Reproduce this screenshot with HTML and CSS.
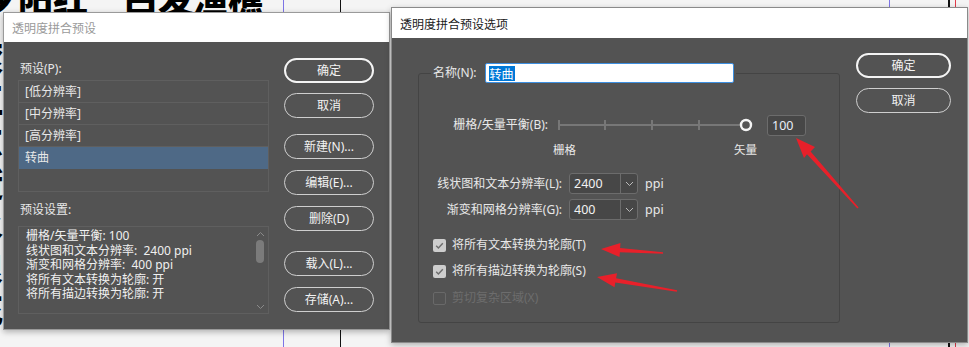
FILE: index.html
```html
<!DOCTYPE html>
<html lang="zh">
<head>
<meta charset="utf-8">
<title>透明度拼合预设</title>
<link rel="stylesheet" href="styles.css">
</head>
<body>
<div class="desk">
  <div class="doc-text">夕阳红　白发渔樵</div>
  <div class="doc-edge">滚<br>江<br>东<br>逝<br>水<br>浪<br>花</div>
  <div class="vline purple l1"></div>
  <div class="vline black l2"></div>
  <div class="vline purple l3"></div>
  <div class="vline black thick l4"></div>
  <div class="vline red l5"></div>

  <div class="dlg dlg-left">
    <div class="titlebar inactive">透明度拼合预设</div>
    <div class="left-body">
      <div class="col-main">
        <div class="lbl">预设(P):</div>
        <div class="listbox">
          <div class="row">[低分辨率]</div>
          <div class="row">[中分辨率]</div>
          <div class="row">[高分辨率]</div>
          <div class="row sel">转曲</div>
        </div>
        <div class="lbl lbl2">预设设置:</div>
        <div class="infobox">
          <div class="infotext">
            <div>栅格/矢量平衡: 100</div>
            <div>线状图和文本分辨率:&nbsp; 2400 ppi</div>
            <div>渐变和网格分辨率:&nbsp; 400 ppi</div>
            <div>将所有文本转换为轮廓: 开</div>
            <div>将所有描边转换为轮廓: 开</div>
          </div>
          <div class="scrollbar">
            <svg class="chev" width="9" height="6" viewBox="0 0 9 6"><path d="M1 5 L4.5 1.5 L8 5" fill="none" stroke="#8a8a8a" stroke-width="1"/></svg>
            <div class="thumb"></div>
            <div class="spacer"></div>
            <svg class="chev" width="9" height="6" viewBox="0 0 9 6"><path d="M1 1 L4.5 4.5 L8 1" fill="none" stroke="#8a8a8a" stroke-width="1"/></svg>
          </div>
        </div>
      </div>
      <div class="col-btns">
        <div class="btn-group">
          <button class="btn primary">确定</button>
          <button class="btn">取消</button>
        </div>
        <div class="btn-group g2">
          <button class="btn">新建(N)...</button>
          <button class="btn">编辑(E)...</button>
          <button class="btn">删除(D)</button>
        </div>
        <div class="btn-group g3">
          <button class="btn">载入(L)...</button>
          <button class="btn">存储(A)...</button>
        </div>
      </div>
    </div>
  </div>

  <div class="dlg dlg-right">
    <div class="titlebar">透明度拼合预设选项</div>
    <div class="right-body">
      <fieldset class="group">
        <legend class="legend">
          <span class="name-lbl">名称(N):</span>
          <span class="name-input"><span class="selected-text">转曲</span></span>
        </legend>
        <div class="slider-row">
          <span class="r-lbl slider-lbl">栅格/矢量平衡(B):</span>
          <svg class="slider" width="196" height="16" viewBox="0 0 196 16">
            <line x1="0" y1="8" x2="188" y2="8" stroke="#777" stroke-width="2"/>
            <line x1="1" y1="3" x2="1" y2="13" stroke="#777" stroke-width="2"/>
            <line x1="47" y1="3" x2="47" y2="13" stroke="#777" stroke-width="2"/>
            <line x1="94" y1="3" x2="94" y2="13" stroke="#777" stroke-width="2"/>
            <line x1="141" y1="3" x2="141" y2="13" stroke="#777" stroke-width="2"/>
            <circle cx="188" cy="8" r="5" fill="#535353" stroke="#f4f4f4" stroke-width="2.4"/>
          </svg>
          <span class="num-input">100</span>
        </div>
        <div class="slider-ends">
          <span>栅格</span>
          <span>矢量</span>
        </div>
        <div class="res-row r1">
          <span class="r-lbl res-lbl">线状图和文本分辨率(L):</span>
          <span class="select">
            <span class="sel-val">2400</span>
            <span class="sel-btn"><svg width="9" height="6" viewBox="0 0 9 6"><path d="M1 1 L4.5 4.5 L8 1" fill="none" stroke="#bbb" stroke-width="1"/></svg></span>
          </span>
          <span class="unit">ppi</span>
        </div>
        <div class="res-row r2">
          <span class="r-lbl res-lbl">渐变和网格分辨率(G):</span>
          <span class="select">
            <span class="sel-val">400</span>
            <span class="sel-btn"><svg width="9" height="6" viewBox="0 0 9 6"><path d="M1 1 L4.5 4.5 L8 1" fill="none" stroke="#bbb" stroke-width="1"/></svg></span>
          </span>
          <span class="unit">ppi</span>
        </div>
        <div class="chk-row c1">
          <span class="chk on"><svg width="13" height="13" viewBox="0 0 13 13"><path d="M3.2 6.8 L5.4 9 L9.8 4.2" fill="none" stroke="#6c6c6c" stroke-width="1.4"/></svg></span>
          <span>将所有文本转换为轮廓(T)</span>
        </div>
        <div class="chk-row c2">
          <span class="chk on"><svg width="13" height="13" viewBox="0 0 13 13"><path d="M3.2 6.8 L5.4 9 L9.8 4.2" fill="none" stroke="#6c6c6c" stroke-width="1.4"/></svg></span>
          <span>将所有描边转换为轮廓(S)</span>
        </div>
        <div class="chk-row c3 disabled">
          <span class="chk off"></span>
          <span>剪切复杂区域(X)</span>
        </div>
      </fieldset>
      <div class="col-btns right-btns">
        <div class="btn-group">
          <button class="btn primary">确定</button>
          <button class="btn">取消</button>
        </div>
      </div>
    </div>
  </div>

  <svg class="arrows" width="969" height="347" viewBox="0 0 969 347">
    <polygon fill="#e8202a" points="796,138 815,147 810.6,151.4 858.6,207.6 857.4,208.4 807,154.2 804,158"/>
    <polygon fill="#e8202a" points="601,249 620.5,243 620.1,247.9 663,252.3 663,253.7 619.9,252.3 619.5,257"/>
    <polygon fill="#e8202a" points="597,277 617,273.3 616.1,278.2 677.2,290.2 676.8,291.8 615.3,282.4 614.5,287.2"/>
  </svg>
</div>
</body>
</html>
```

FILE: styles.css
```css
* { box-sizing: border-box; }

html, body {
  margin: 0;
  padding: 0;
}

body {
  width: 969px;
  height: 347px;
  overflow: hidden;
  background: #f3f3f3;
  font-family: "Noto Sans", "Noto Sans CJK SC", sans-serif;
  font-size: 12px;
  color: #e8e8e8;
}

.desk {
  position: relative;
  width: 969px;
  height: 347px;
  overflow: hidden;
  background: #f4f4f4;
}

/* document behind the dialogs */
.doc-text {
  position: absolute;
  left: -17px;
  top: -22px;
  font-family: "Noto Sans CJK SC", sans-serif;
  font-weight: 900;
  font-size: 35px;
  line-height: 40px;
  color: #000;
  white-space: nowrap;
}

.doc-edge {
  position: absolute;
  left: -31px;
  top: 36px;
  font-family: "Noto Sans CJK SC", sans-serif;
  font-weight: 900;
  font-size: 34px;
  line-height: 42px;
  color: #000;
}

.vline {
  position: absolute;
  top: 0;
  width: 1px;
  height: 347px;
}
.vline.purple { background: #7d74e6; }
.vline.black { background: #111; }
.vline.red { background: #e23b4a; }
.vline.thick { width: 2px; }
.l1 { left: 283px; }
.l2 { left: 340px; }
.l3 { left: 889px; }
.l4 { left: 948px; }
.l5 { left: 955px; }

/* dialogs */
.dlg {
  position: absolute;
  background: #535353;
  border: 1px solid #9a9a9a;
  box-shadow: 0 2px 6px rgba(0, 0, 0, 0.28);
  display: flex;
  flex-direction: column;
}

.dlg-left {
  left: 3px;
  top: 12px;
  width: 387px;
  height: 318px;
}

.dlg-right {
  left: 391px;
  top: 7px;
  width: 577px;
  height: 336px;
  border-color: #8a8a8a;
}

.titlebar {
  background: #ffffff;
  height: 30px;
  flex: none;
  display: flex;
  align-items: center;
  padding-left: 8px;
  font-family: "Noto Sans CJK SC", sans-serif;
  font-size: 12px;
  color: #1a1a1a;
}
.titlebar.inactive {
  height: 29px;
  color: #9a9a9a;
}

/* left dialog body */
.left-body {
  flex: 1;
  display: flex;
  padding: 16px 0 0 14px;
}

.col-main {
  width: 251px;
  padding-top: 3px;
  display: flex;
  flex-direction: column;
}

.lbl {
  height: 16px;
  line-height: 16px;
  padding-left: 2px;
  margin-bottom: 3px;
}
.lbl2 {
  margin-top: 10px;
  margin-bottom: 8px;
}

.listbox {
  height: 112px;
  border: 1px solid #5f5f5f;
}
.row {
  height: 22px;
  line-height: 21px;
  border-bottom: 1px solid #5f5f5f;
  padding-left: 6px;
}
.row.sel {
  background: #4e6986;
  border-bottom-color: #4e6986;
}

.infobox {
  height: 88px;
  border: 1px solid #5f5f5f;
  display: flex;
}
.infotext {
  flex: 1;
  padding: 2px 0 0 7px;
  font-size: 12px;
  line-height: 14.5px;
  color: #f0f0f0;
}
.scrollbar {
  width: 14px;
  margin-right: 1px;
  display: flex;
  flex-direction: column;
  align-items: center;
  padding: 4px 0 3px;
}
.chev { display: block; flex: none; }
.thumb {
  width: 8px;
  height: 23px;
  margin-top: 3px;
  border-radius: 4px;
  background: #7b7b7b;
}
.spacer { flex: 1; }

.col-btns {
  width: 90px;
  margin-left: 15px;
  display: flex;
  flex-direction: column;
}
.btn-group {
  display: flex;
  flex-direction: column;
  gap: 10px;
}
.btn-group.g2 {
  margin-top: 16px;
  gap: 11px;
}
.btn-group.g3 {
  margin-top: 20px;
  gap: 11px;
}

.btn {
  height: 25px;
  width: 100%;
  border: 1px solid #cfcfcf;
  border-radius: 13px;
  background: transparent;
  color: #f2f2f2;
  font-family: "Noto Sans", "Noto Sans CJK SC", sans-serif;
  font-size: 12px;
  padding: 0;
  line-height: 1;
}
.btn.primary {
  border: 2px solid #f4f4f4;
}

/* right dialog body */
.right-body {
  flex: 1;
  display: flex;
  align-items: flex-start;
  padding: 15px 0 0 26px;
}

.group {
  width: 422px;
  margin: 10px 0 0 0;
  padding: 0 0 16px 0;
  border: 1px solid #444444;
  border-radius: 3px;
  min-width: 0;
}

.legend {
  margin-left: 12px;
  padding: 0 2px;
  height: 20px;
  display: flex;
  align-items: center;
}
.name-lbl {
  line-height: 16px;
  margin-right: 8px;
}
.name-input {
  width: 249px;
  height: 20px;
  background: #fff;
  border: 1px solid #3d8fe0;
  border-radius: 2px;
  display: flex;
  align-items: center;
  padding-left: 3px;
}
.selected-text {
  background: #0078d7;
  color: #fff;
  line-height: 15px;
  height: 15px;
  padding: 0 1px;
  font-family: "Noto Sans CJK SC", sans-serif;
}

.r-lbl {
  text-align: right;
  line-height: 16px;
  flex: none;
}

.slider-row {
  margin-top: 31px;
  height: 22px;
  display: flex;
  align-items: center;
}
.slider-lbl { width: 129px; }
.slider {
  display: block;
  margin-left: 10px;
  flex: none;
}
.num-input {
  margin-left: 13px;
  width: 39px;
  height: 21px;
  border: 1px solid #6c6c6c;
  border-radius: 3px;
  background: #474747;
  color: #e9eef8;
  line-height: 19px;
  padding-left: 4px;
  font-size: 12.5px;
}

.slider-ends {
  margin: 6px 0 0 134px;
  width: 204px;
  height: 16px;
  line-height: 16px;
  display: flex;
  justify-content: space-between;
  font-size: 11.5px;
}

.res-row {
  height: 21px;
  display: flex;
  align-items: center;
}
.res-row.r1 { margin-top: 15px; }
.res-row.r2 { margin-top: 5px; }
.res-lbl {
  width: 143px;
  margin-right: 7px;
}
.select {
  width: 69px;
  height: 21px;
  border: 1px solid #6c6c6c;
  border-radius: 3px;
  background: #474747;
  display: flex;
}
.sel-val {
  flex: 1;
  padding-left: 4px;
  line-height: 19px;
  color: #f2f2f2;
  font-size: 12.5px;
}
.sel-btn {
  width: 17px;
  border-left: 1px solid #6c6c6c;
  display: flex;
  align-items: center;
  justify-content: center;
}
.sel-btn svg { display: block; }
.unit {
  margin-left: 7px;
  font-size: 12.5px;
  line-height: 16px;
}

.chk-row {
  height: 16px;
  display: flex;
  align-items: center;
  padding-left: 14px;
  line-height: 16px;
}
.chk-row.c1 { margin-top: 17px; }
.chk-row.c2 { margin-top: 10px; }
.chk-row.c3 { margin-top: 11px; }
.chk {
  width: 13px;
  height: 13px;
  border-radius: 2px;
  margin-right: 6px;
  flex: none;
}
.chk svg { display: block; }
.chk.on { background: #cdcdcd; }
.chk.off { border: 1px solid #696969; }
.chk-row.disabled { color: #6d6d6d; }

.right-btns {
  width: 95px;
  margin-left: 16px;
}

.arrows {
  position: absolute;
  left: 0;
  top: 0;
  pointer-events: none;
}
```
